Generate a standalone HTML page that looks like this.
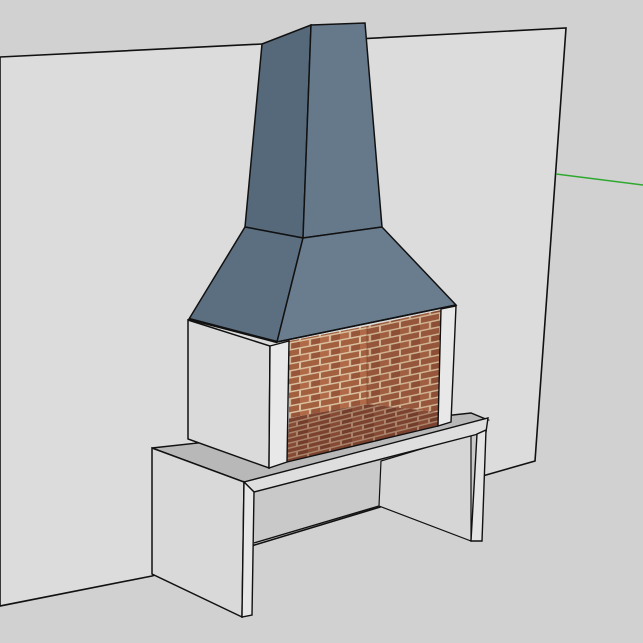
<!DOCTYPE html>
<html><head><style>html,body{margin:0;padding:0;background:#d2d2d2}svg{display:block}</style></head>
<body>
<svg width="643" height="643" viewBox="0 0 643 643" xmlns="http://www.w3.org/2000/svg">
<defs>
<pattern id="br" width="20" height="14" patternUnits="userSpaceOnUse" patternTransform="skewY(-11)">
<rect width="20" height="14" fill="#d9bf9e"/>
<rect x="1" y="1" width="18" height="5.5" fill="#a2603f"/>
<rect x="-9" y="8" width="18" height="5.5" fill="#b06a48"/>
<rect x="11" y="8" width="18" height="5.5" fill="#97553a"/>
</pattern>
<pattern id="brR" width="20" height="14" patternUnits="userSpaceOnUse" patternTransform="skewY(-12)">
<rect width="20" height="14" fill="#cfb291"/>
<rect x="1" y="1" width="18" height="5.5" fill="#95563b"/>
<rect x="-9" y="8" width="18" height="5.5" fill="#a15f42"/>
<rect x="11" y="8" width="18" height="5.5" fill="#8c4f36"/>
</pattern>
<pattern id="br2" width="22" height="10" patternUnits="userSpaceOnUse" patternTransform="skewY(-14)">
<rect width="22" height="10" fill="#a9836a"/>
<rect x="1" y="1" width="20" height="3.5" fill="#7b4230"/>
<rect x="-10" y="6" width="20" height="3.5" fill="#864a35"/>
<rect x="12" y="6" width="20" height="3.5" fill="#733d2b"/>
</pattern>
</defs>
<rect width="643" height="643" fill="#d1d1d1"/>
<polygon points="0,57 262,44 566,28 535,461 486,475 152,576 0,606" fill="#dcdcdc" stroke="#111" stroke-width="1.6"/>
<line x1="556" y1="174" x2="643" y2="185" stroke="#2fa82f" stroke-width="1.4"/>
<polygon points="262,44 311,25 303,238 245,227" fill="#56697b" stroke="#111" stroke-width="1.5"/>
<polygon points="311,25 365,23 382,227 303,238" fill="#66798b" stroke="#111" stroke-width="1.5"/>
<polygon points="245,227 303,238 277,342 189,319" fill="#5c6f81" stroke="#111" stroke-width="1.5"/>
<polygon points="303,238 382,227 456,305 277,342" fill="#6a7d8f" stroke="#111" stroke-width="1.5"/>
<polygon points="152,448 471,413 488,420 244,482" fill="#b8b8b8" stroke="#111" stroke-width="1.4"/>
<polygon points="254,492 477,434 477,541 379,506 254,543" fill="#c9c9c9"/>
<polygon points="381,461 471,434 471,541 379,506" fill="#d6d6d6" stroke="#111" stroke-width="1.2"/>
<polygon points="244,482 488,418 486,432 254,492" fill="#dedede" stroke="#111" stroke-width="1.4"/>
<line x1="254" y1="543" x2="379" y2="506" stroke="#111" stroke-width="1.4"/>
<polygon points="477,434 486,430 482,541 471,541" fill="#e4e4e4" stroke="#111" stroke-width="1.4"/>
<polygon points="152,448 244,482 242,617 152,574" fill="#d9d9d9" stroke="#111" stroke-width="1.5"/>
<polygon points="244,482 254,492 252,615 242,617" fill="#e6e6e6" stroke="#111" stroke-width="1.4"/>
<!-- firebox -->
<polygon points="289,341 367,326 367,404 289,418" fill="url(#br)"/>
<polygon points="367,326 441,310 438,412 367,404" fill="url(#brR)"/>
<polygon points="289,418 367,404 438,412 438,426 287,462" fill="url(#br2)"/>
<line x1="367" y1="326" x2="367" y2="404" stroke="#6a3a25" stroke-width="0.8" opacity="0.6"/>
<line x1="287" y1="462" x2="438" y2="426" stroke="#111" stroke-width="1.4"/>
<polygon points="188,320 270,346 269,468 188,439" fill="#dadada" stroke="#111" stroke-width="1.5"/>
<polygon points="270,346 289,341 287,462 269,468" fill="#e8e8e8" stroke="#111" stroke-width="1.4"/>
<polygon points="441,309 456,306 451,422 438,426" fill="#e8e8e8" stroke="#111" stroke-width="1.4"/>
<line x1="189" y1="319" x2="277" y2="342" stroke="#111" stroke-width="2.5"/>
<line x1="277" y1="342" x2="456" y2="305" stroke="#111" stroke-width="1.6"/>
</svg>
</body></html>
